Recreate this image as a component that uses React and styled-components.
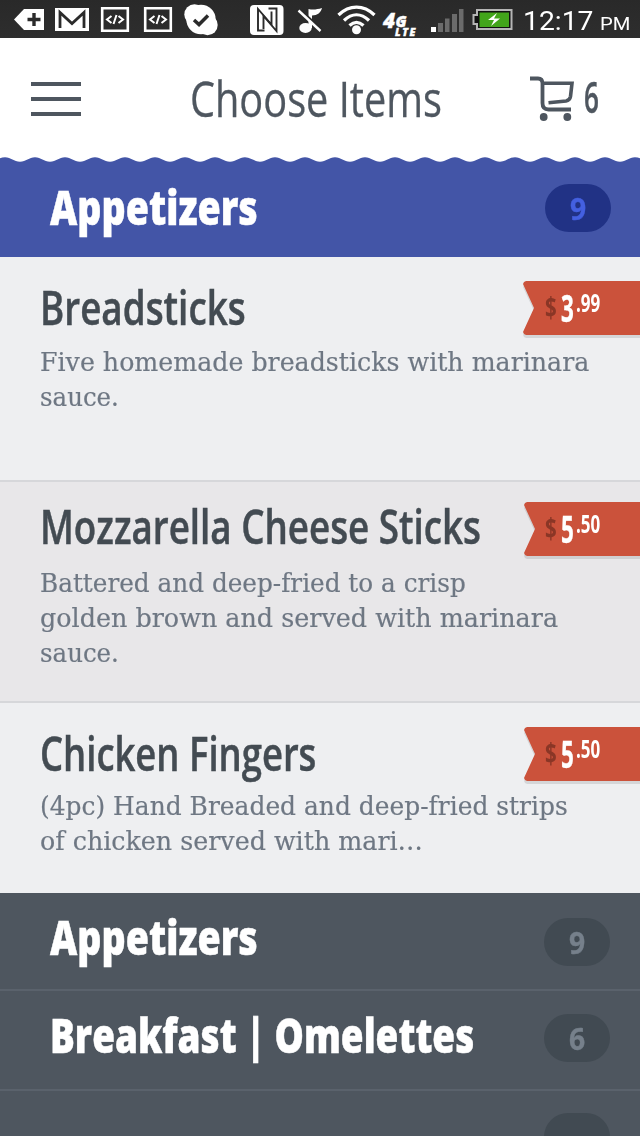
import React,{useLayoutEffect,useRef,useState} from 'react'
import styled,{createGlobalStyle} from 'styled-components'

const GlobalStyle = createGlobalStyle`
*{
box-sizing:border-box;
}
body{
margin:0;
background:#eeeff1;
font-family:"Open Sans","Noto Sans",sans-serif;
}
`

const Screen = styled.div`
width:640px;
height:1136px;
overflow:hidden;
display:flex;
flex-direction:column;
`

const StatusBar = styled.div`
height:38px;
flex:none;
background:linear-gradient(#292929,#2e2e2e);
display:flex;
align-items:center;
color:#fff;
`

const StatusIcons = styled.svg`
display:block;
flex:none;
`

const Clock = styled.div`
display:flex;
align-items:baseline;
gap:6px;
margin-left:3px;
font-family:Roboto,sans-serif;
line-height:34px;
padding-top:6px;
`

const Time = styled.span`
font-size:25.5px;
`

const Meridiem = styled.span`
font-size:17.5px;
`

const Header = styled.header`
height:119px;
flex:none;
background:#fff;
display:flex;
align-items:center;
padding:1px 0 0 31px;
`

const Hamburger = styled.button`
width:50px;
height:34px;
margin-top:2px;
padding:0;
border:0;
background:none;
display:flex;
flex-direction:column;
justify-content:space-between;
`

const Bar = styled.span`
height:4px;
background:#4e565f;
`

const PageTitle = styled.h1`
margin:0 0 0 109px;
width:340px;
color:#4e565f;
font-size:49px;
font-weight:400;
line-height:66px;
-webkit-text-stroke:.3px;
`

const Cart = styled.div`
display:flex;
align-items:center;
gap:9px;
color:#4e565f;
`

const CartCount = styled.span`
margin-top:-2px;
font-size:43.5px;
font-weight:600;
line-height:60px;
-webkit-text-stroke:.4px;
`

const Category = styled.section`
height:${p => p.$height}px;
flex:none;
position:relative;
display:flex;
align-items:flex-start;
justify-content:space-between;
padding:${p => p.$active ? '20px 29px 0 50px' : '14px 30px 0 50px'};
background:${p => p.$active ? '#4355a7' : '#4e565f'};
`

const Divider = styled.div`
height:2px;
flex:none;
background:${p => p.$dark ? '#5a626c' : '#d6d7da'};
`

const Wave = styled.svg`
position:absolute;
left:0;
top:0;
`

const CategoryName = styled.h2`
margin:0;
color:#fff;
font-size:47px;
font-weight:800;
line-height:60px;
-webkit-text-stroke:.5px;
`

const Badge = styled.span`
width:66px;
height:48px;
margin-top:${p => p.$offset}px;
border-radius:24px;
display:flex;
align-items:center;
justify-content:center;
background:${p => p.$active ? '#213285' : '#414a52'};
color:${p => p.$active ? '#4460e0' : '#76808b'};
font-size:30px;
font-weight:700;
line-height:49px;
-webkit-text-stroke:.4px;
`

const Item = styled.article`
height:${p => p.$height}px;
flex:none;
padding:${p => p.$top}px 0 0 40px;
background:${p => p.$shade ? '#e8e7e9' : '#eeeff1'};
`

const ItemTop = styled.div`
height:60px;
display:flex;
justify-content:space-between;
align-items:flex-start;
margin-bottom:${p => p.$gap}px;
`

const ItemName = styled.h3`
margin:0;
color:#434b52;
font-size:47px;
font-weight:600;
line-height:60px;
-webkit-text-stroke:.5px;
`

const Description = styled.div`
color:#6e7783;
font-family:"DejaVu Serif","Liberation Serif",serif;
font-size:26px;
line-height:35px;
-webkit-text-stroke:.2px;
`

const RibbonShadow = styled.div`
margin-top:${p => p.$drop}px;
filter:drop-shadow(0 3px 0 rgba(0,0,0,.1));
`

const Ribbon = styled.div`
width:${p => p.$width}px;
height:54px;
display:flex;
align-items:flex-start;
justify-content:flex-end;
padding-right:40px;
background:#cb523b;
clip-path:polygon(3px 0,100% 0,100% 54px,3px 54px,1px 53px,0 51px,11px 27px,0 3px,1px 1px);
color:#fff;
font-weight:700;
`

const Dollar = styled.span`
font-size:29px;
line-height:52px;
color:#8a3626;
`

const Whole = styled.span`
margin-left:4px;
font-size:38px;
line-height:52px;
-webkit-text-stroke:.4px;
`

const Cents = styled.span`
margin-left:2px;
font-size:25.5px;
line-height:42px;
`

const FitBox = styled.span`
display:block;
width:${p => p.$width}px;
`

const FitInner = styled.span`
display:inline-block;
white-space:nowrap;
transform-origin:0 50%;
`

// squeezes one line of text to the given width
const Fit = ({width,children}) => {

const ref = useRef(null);
const [scale,setScale] = useState(1);

useLayoutEffect(() => {
   const measure = () => setScale(width / ref.current.offsetWidth);
   measure();
   document.fonts.ready.then(measure);
},[width,children])

  return (
   <FitBox $width={width}>
       <FitInner ref={ref} style={{transform:`scaleX(${scale})`}}>{children}</FitInner>
   </FitBox>
  )
}

const NoticeIcons = () => (
   <StatusIcons width="520" height="38" viewBox="0 0 520 38" fill="#fff">
       <path d="M14 19.500L24 9h20v21H24z"/>
       <path d="M34 13v13M27.500 19.500h13" stroke="#2b2b2b" strokeWidth="3.400"/>
       <path d="M55 8h34v23H55z"/>
       <path d="M60 28V12.500l12 11 12-11V28" fill="none" stroke="#2b2b2b" strokeWidth="2.800"/>
       {[102,145].map(x => (
         <g key={x} fill="none" stroke="#fff">
           <path d={`M${x+.2} 8.200h25.600v22.600h-25.600z`} strokeWidth="2.600"/>
           <path d={`M${x+9.500} 16l-4.500 3.500 4.500 3.500M${x+16.500} 16l4.500 3.500-4.500 3.500M${x+14.500} 15l-3 9`} strokeWidth="2"/>
         </g>
       ))}
       <circle cx="201" cy="19.500" r="14.700"/>
       <circle cx="194.500" cy="14.500" r="10.200"/>
       <circle cx="207.500" cy="25" r="10.200"/>
       <path d="M194 20l5 4.500 9-9" fill="none" stroke="#2b2b2b" strokeWidth="3.500"/>
       <rect x="250" y="5" width="33.500" height="30" rx="4"/>
       <path d="M264.500 30.500h-6.500V9l13.500 15.500V11.500" fill="none" stroke="#2b2b2b" strokeWidth="1.900"/>
       <path d="M268.500 8.500h8V31L263.500 16v13" fill="none" stroke="#2b2b2b" strokeWidth="1.900"/>
       <ellipse cx="305.500" cy="28" rx="6.200" ry="5"/>
       <path d="M308.500 28V9c4.500 1 8.500 .5 13.500-1-1 4.500-4.500 7.500-10 7.500V28z"/>
       <path d="M300 10l23 21" stroke="#2b2b2b" strokeWidth="3"/>
       <path d="M298.500 10.500l22 20.500" stroke="#fff" strokeWidth="2.400"/>
       <g fill="none" stroke="#fff" strokeWidth="3.300">
         <path d="M338.500 15c11-10.500 25-10.500 36 0"/>
         <path d="M344 20.500c8-7.500 17-7.500 25 0"/>
         <path d="M349.500 25.500c4.500-4 9.500-4 14 0"/>
       </g>
       <circle cx="356.500" cy="29.700" r="4.500"/>
       <text fontFamily="Open Sans,sans-serif" fontWeight="800" fontStyle="italic" stroke="#fff" strokeWidth=".4">
         <tspan x="383" y="27.500" fontSize="21">4</tspan>
         <tspan x="395.500" y="26.500" fontSize="16">G</tspan>
         <tspan x="395" y="35.500" fontSize="10.500" letterSpacing="1.600">LTE</tspan>
       </text>
       <path d="M431 27h5v5h-5z"/>
       <path d="M438 23h5v9h-5zM445 18.500h4.500v13.500H445zM452 14h5v18h-5zM459 9h4.500v23H459z" fill="#6b6b6b"/>
       <path d="M477 10h34.500v19H477v-5h-3.500v-9h3.500z" fill="#111" stroke="#b5b5b5" strokeWidth="2"/>
       <path d="M479.500 12.500H509v14.500h-29.500z" fill="#42a51a"/>
       <path d="M497 13l-9 7h6l-3 6 9-7.500h-6z"/>
   </StatusIcons>
)

const CartIcon = () => (
   <svg width="45" height="46" viewBox="0 0 45 46" fill="none" stroke="#4e565f" strokeWidth="3.800">
       <path d="M0 3.500h8c3.500 0 4.500 2 4.500 5v19.500c0 4.500 2 6.500 6 6.500h22.500"/>
       <path d="M12 8.200h30l-1.500 13.300c-.5 3-1.500 4-4.500 4.500L18.500 27.700" strokeWidth="3.600"/>
       <circle cx="13.700" cy="42" r="3.900" fill="#4e565f" stroke="none"/>
       <circle cx="37.300" cy="42" r="3.900" fill="#4e565f" stroke="none"/>
   </svg>
)

// white scallops hanging from the header, 30px apart
const HeaderWave = () => {
  let d = 'M-10 0V4.700';
  for(let x=-10;x<650;x+=30) d += `C${x+6} 4.700 ${x+9} .3 ${x+15} .3C${x+21} .3 ${x+24} 4.700 ${x+30} 4.700`;
  return (
   <Wave width="640" height="6">
       <path d={d+'V0z'} fill="#fff"/>
   </Wave>
  )
}

const items = [
  {name:'Breadsticks',nameWidth:206,whole:'3',cents:'.99',height:223,top:20,gap:8,drop:4,ribbon:117,
   lines:[['Five homemade breadsticks with marinara',549],['sauce.',79]]},
  {name:'Mozzarella Cheese Sticks',nameWidth:441,whole:'5',cents:'.50',height:219,top:14,gap:10,drop:6,ribbon:116,shade:true,
   lines:[['Battered and deep-fried to a crisp',426],['golden brown and served with marinara',518],['sauce.',79]]},
  {name:'Chicken Fingers',nameWidth:276,whole:'5',cents:'.50',height:190,top:20,gap:6,drop:4,ribbon:116,
   lines:[['(4pc) Hand Breaded and deep-fried strips',528],['of chicken served with mari…',383]]},
]

const MenuItem = ({item}) => (
   <Item $height={item.height} $top={item.top} $shade={item.shade}>
       <ItemTop $gap={item.gap}>
           <ItemName><Fit width={item.nameWidth}>{item.name}</Fit></ItemName>
           <RibbonShadow $drop={item.drop}>
               <Ribbon $width={item.ribbon}>
                   <Dollar><Fit width={12}>$</Fit></Dollar>
                   <Whole><Fit width={13}>{item.whole}</Fit></Whole>
                   <Cents><Fit width={24}>{item.cents}</Fit></Cents>
               </Ribbon>
           </RibbonShadow>
       </ItemTop>
       <Description>
           {item.lines.map(([text,width]) => <Fit key={text} width={width}>{text}</Fit>)}
       </Description>
   </Item>
)

const App = () => {
  return (
   <>
   <GlobalStyle/>
   <Screen>
       <StatusBar>
           <NoticeIcons/>
           <Clock>
               <Time><Fit width={71}>12:17</Fit></Time>
               <Meridiem><Fit width={30}>PM</Fit></Meridiem>
           </Clock>
       </StatusBar>
       <Header>
           <Hamburger aria-label="Menu"><Bar/><Bar/><Bar/></Hamburger>
           <PageTitle><Fit width={252}>Choose Items</Fit></PageTitle>
           <Cart>
               <CartIcon/>
               <CartCount><Fit width={15}>6</Fit></CartCount>
           </Cart>
       </Header>
       <Category $active $height={100}>
           <HeaderWave/>
           <CategoryName><Fit width={208}>Appetizers</Fit></CategoryName>
           <Badge $active $offset={7}><Fit width={16}>9</Fit></Badge>
       </Category>
       <MenuItem item={items[0]}/>
       <Divider/>
       <MenuItem item={items[1]}/>
       <Divider/>
       <MenuItem item={items[2]}/>
       <Category $height={96}>
           <CategoryName><Fit width={208}>Appetizers</Fit></CategoryName>
           <Badge $offset={11}><Fit width={16}>9</Fit></Badge>
       </Category>
       <Divider $dark/>
       <Category $height={98}>
           <CategoryName><Fit width={424}>Breakfast | Omelettes</Fit></CategoryName>
           <Badge $offset={9}><Fit width={16}>6</Fit></Badge>
       </Category>
       <Divider $dark/>
       <Category $height={98}>
           <CategoryName/>
           <Badge $offset={8}/>
       </Category>
   </Screen>
   </>
  )
}

export default App
